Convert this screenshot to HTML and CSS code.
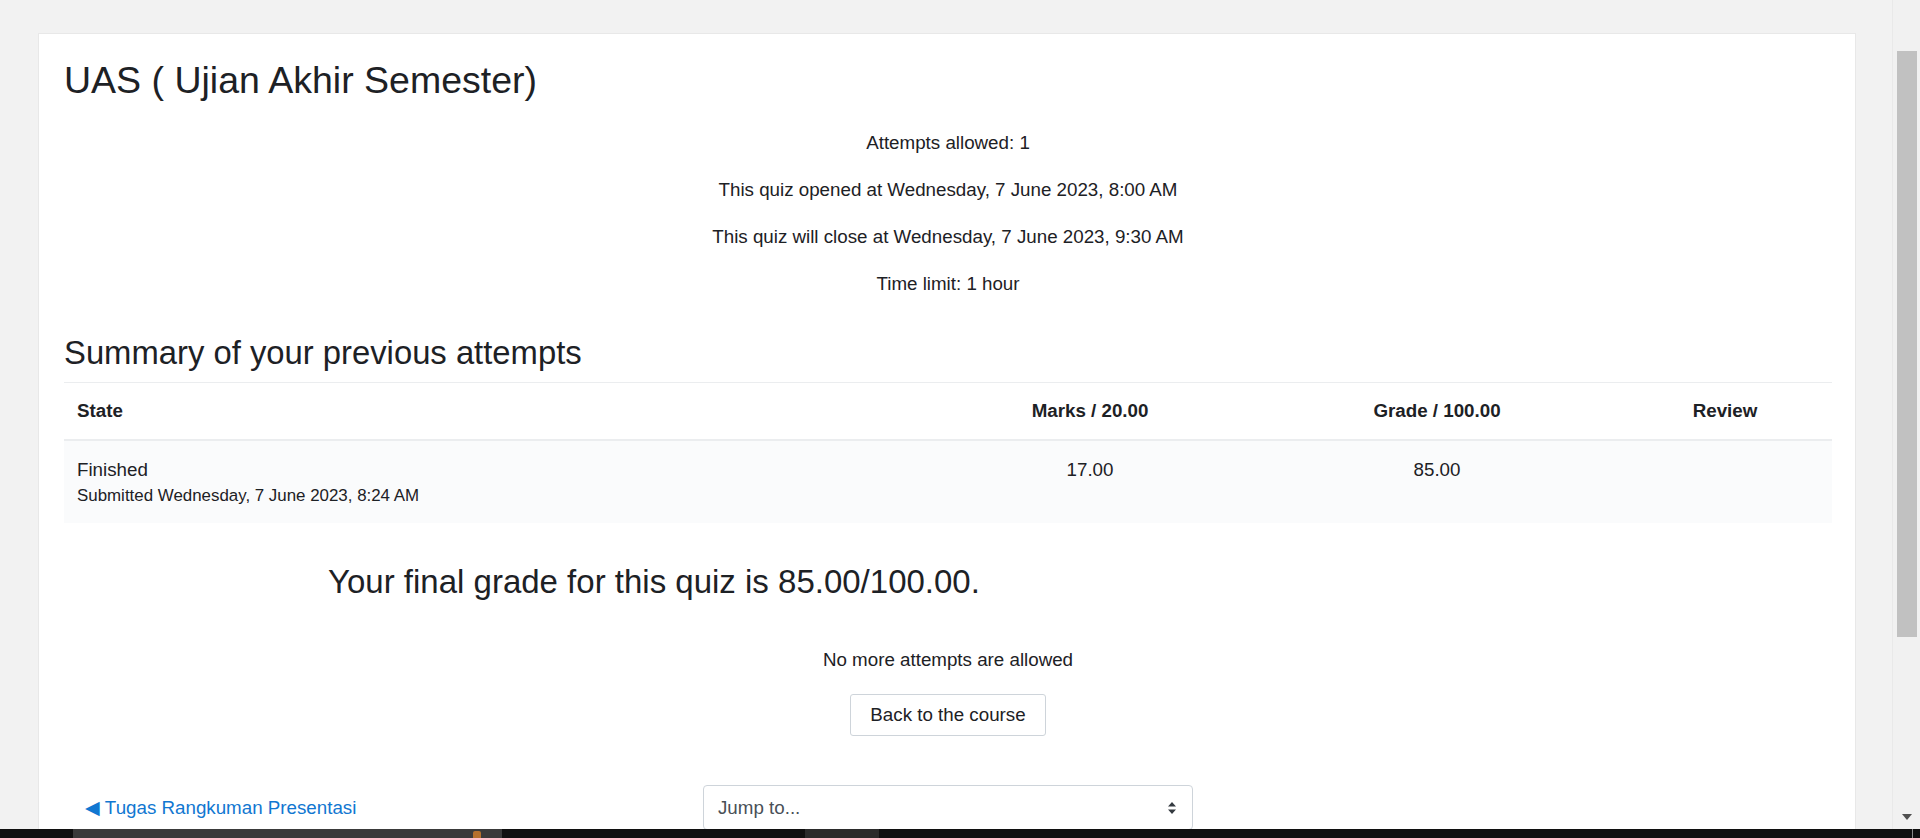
FILE: index.html
```html
<!DOCTYPE html>
<html lang="en">
<head>
<meta charset="utf-8">
<title>UAS ( Ujian Akhir Semester)</title>
<link rel="stylesheet" href="styles.css">
</head>
<body>
<div class="screen">
  <div class="viewport">
    <main class="page">
      <section class="card">
        <h2 class="title">UAS ( Ujian Akhir Semester)</h2>
        <div class="quizinfo">
          <p>Attempts allowed: 1</p>
          <p>This quiz opened at Wednesday, 7 June 2023, 8:00 AM</p>
          <p>This quiz will close at Wednesday, 7 June 2023, 9:30 AM</p>
          <p>Time limit: 1 hour</p>
        </div>
        <h3 class="summary-title">Summary of your previous attempts</h3>
        <table class="attempts">
          <colgroup>
            <col class="c-state"><col class="c-marks"><col class="c-grade"><col class="c-review">
          </colgroup>
          <thead>
            <tr>
              <th class="left">State</th>
              <th>Marks / 20.00</th>
              <th>Grade / 100.00</th>
              <th>Review</th>
            </tr>
          </thead>
          <tbody>
            <tr>
              <td class="left"><div class="state">Finished</div><div class="submitted">Submitted Wednesday, 7 June 2023, 8:24 AM</div></td>
              <td>17.00</td>
              <td>85.00</td>
              <td></td>
            </tr>
          </tbody>
        </table>
        <div class="feedback"><h3>Your final grade for this quiz is 85.00/100.00.</h3></div>
        <div class="quizbox">
          <p>No more attempts are allowed</p>
          <button class="btn" type="button">Back to the course</button>
        </div>
        <div class="activity-nav">
          <div class="nav-prev"><a href="#">&#9664; Tugas Rangkuman Presentasi</a></div>
          <div class="nav-jump">
            <div class="jump-select"><span>Jump to...</span>
              <svg class="jump-arrows" width="10" height="14" viewBox="0 0 10 14"><path d="M1 5.5 L5 1 L9 5.5 Z M1 8.5 L5 13 L9 8.5 Z" fill="#343a40"/></svg>
            </div>
          </div>
          <div class="nav-next"></div>
        </div>
      </section>
    </main>
    <div class="scrollbar">
      <div class="thumb"></div>
      <svg class="sb-arrow" width="10" height="6" viewBox="0 0 10 6"><path d="M0 0 L10 0 L5 6 Z" fill="#505050"/></svg>
    </div>
  </div>
  <div class="taskbar">
    <div class="task task-a"><span class="task-icon"></span></div>
    <div class="task task-b"></div>
    <div class="task-line"></div>
  </div>
</div>
</body>
</html>
```
FILE: styles.css
```css
* { box-sizing: border-box; }
html, body { margin: 0; padding: 0; }
body {
  font-family: "Liberation Sans", Arial, sans-serif;
  color: #1d2125;
  font-size: 18.75px;
  line-height: 28px;
  overflow: hidden;
}
.screen { width: 1920px; height: 838px; display: flex; flex-direction: column; }
.viewport { height: 829px; display: flex; overflow: hidden; }
.page {
  width: 1892px;
  background: #f2f2f2;
  padding: 33px 0 0 38px;
  overflow: hidden;
}
.card {
  width: 1818px;
  min-height: 900px;
  background: #fff;
  border: 1px solid #e8e8e8;
  padding: 24px 23px 24px 25px;
}
.title {
  font-size: 37.5px;
  line-height: 45px;
  font-weight: 400;
  margin: 0 0 26px;
}
.quizinfo { text-align: center; }
.quizinfo p { margin: 0 0 19px; }
.quizinfo p:last-child { margin-bottom: 0; }
.summary-title {
  font-size: 32.8px;
  line-height: 39px;
  font-weight: 400;
  margin: 35px 0 10px;
}
.attempts {
  width: 1768px;
  table-layout: fixed;
  border-collapse: collapse;
}
.c-state { width: 860px; }
.c-marks { width: 332px; }
.c-grade { width: 362px; }
.c-review { width: 214px; }
.attempts th, .attempts td { text-align: center; vertical-align: top; }
.attempts .left { text-align: left; padding-left: 13px; }
.attempts th {
  font-weight: 700;
  padding-top: 14px;
  padding-bottom: 14px;
  border-top: 1px solid #ebedef;
  border-bottom: 2px solid #ebedef;
}
.attempts td {
  padding-top: 15px;
  padding-bottom: 15px;
  background: #fafbfc;
}
.submitted { font-size: 16.9px; line-height: 24px; }
.feedback { padding-left: 264px; }
.feedback h3 {
  font-size: 33px;
  line-height: 39px;
  font-weight: 400;
  margin: 39px 0 0;
}
.quizbox { text-align: center; }
.quizbox p { margin: 45px 0 20px; }
.btn {
  font-family: inherit;
  font-size: 18.75px;
  line-height: 26px;
  color: #1d2125;
  background: #fff;
  border: 1px solid #ced4da;
  border-radius: 3px;
  padding: 7px 15px;
  width: 196px;
}
.activity-nav {
  margin-top: 49px;
  display: grid;
  grid-template-columns: 1fr 1fr 1fr;
  align-items: center;
}
.nav-prev { padding-left: 21px; }
.nav-prev a { color: #1177d1; text-decoration: none; }
.nav-jump { display: flex; justify-content: center; }
.jump-select {
  width: 490px;
  height: 45px;
  border: 1px solid #ced4da;
  border-radius: 4px;
  background: #fff;
  display: flex;
  align-items: center;
  justify-content: space-between;
  padding: 0 15px 0 14px;
  color: #495057;
}
.scrollbar {
  width: 28px;
  background: #f1f1f1;
  border-left: 1px solid #e9e9e9;
  display: flex;
  flex-direction: column;
  align-items: flex-end;
}
.thumb {
  margin-top: 51px;
  width: 20px;
  height: 586px;
  background: #c1c1c1;
  margin-right: 3px;
}
.sb-arrow { margin-top: auto; margin-bottom: 9px; margin-right: 8px; }
.taskbar {
  height: 9px;
  background: #101010;
  display: flex;
}
.task { height: 9px; }
.task-a {
  width: 429px;
  margin-left: 73px;
  background: #3a3a3a;
  position: relative;
}
.task-icon {
  position: absolute;
  left: 400px; top: 2px;
  width: 8px; height: 7px;
  background: #b5702c;
  border-radius: 2px 2px 0 0;
}
.task-b {
  width: 74px;
  margin-left: 303px;
  background: #2b2b2b;
}
.task-line {
  width: 1px;
  margin-left: 1033px;
  background: #8a8a8a;
}
```
